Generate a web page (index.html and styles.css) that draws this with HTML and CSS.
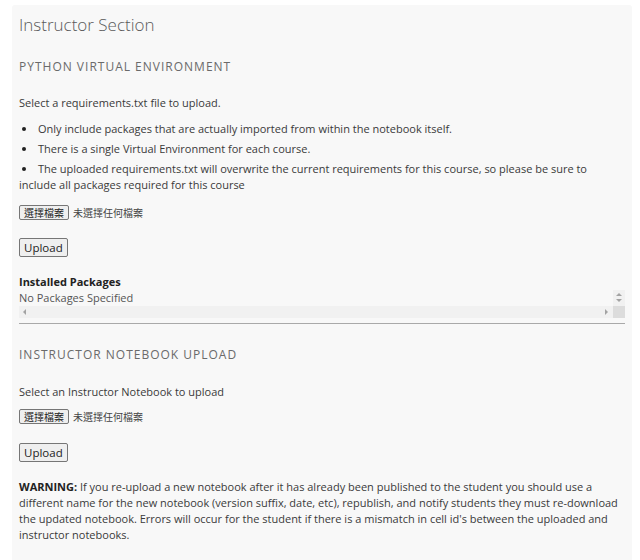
FILE: index.html
```html
<!DOCTYPE html>
<html>
<head>
<meta charset="utf-8">
<link rel="stylesheet" href="styles.css">
</head>
<body>
<div class="panel">
  <h1 class="title">Instructor Section</h1>

  <h2 class="section-head">Python Virtual Environment</h2>
  <p class="intro">Select a requirements.txt file to upload.</p>
  <ul class="bullets">
    <li>Only include packages that are actually imported from within the notebook itself.</li>
    <li>There is a single Virtual Environment for each course.</li>
    <li>The uploaded requirements.txt will overwrite the current requirements for this course, so please be sure to include all packages required for this course</li>
  </ul>
  <div class="file-row file-row-first">
    <button class="file-btn" type="button">選擇檔案</button>
    <span class="file-none">未選擇任何檔案</span>
  </div>
  <button class="upload-btn upload-first" type="button">Upload</button>

  <div class="packages">
    <div class="packages-title">Installed Packages</div>
    <div class="scrollbox">
      <div class="scroll-content">No Packages Specified</div>
      <div class="vbar">
        <span class="arrow-up"></span>
        <span class="arrow-down"></span>
      </div>
      <div class="hbar">
        <span class="arrow-left"></span>
        <span class="arrow-right"></span>
      </div>
      <div class="corner"></div>
    </div>
  </div>

  <hr class="divider">

  <h2 class="section-head section-two">Instructor Notebook Upload</h2>
  <p class="intro intro-two">Select an Instructor Notebook to upload</p>
  <div class="file-row file-row-second">
    <button class="file-btn" type="button">選擇檔案</button>
    <span class="file-none">未選擇任何檔案</span>
  </div>
  <button class="upload-btn upload-second" type="button">Upload</button>

  <p class="warning"><strong>WARNING:</strong> If you re-upload a new notebook after it has already been published to the student you should use a different name for the new notebook (version suffix, date, etc), republish, and notify students they must re-download the updated notebook. Errors will occur for the student if there is a mismatch in cell id's between the uploaded and instructor notebooks.</p>
</div>
</body>
</html>
```

FILE: styles.css
```css
html, body {
  margin: 0;
  padding: 0;
  background: #ffffff;
}

body {
  padding: 5px 8px 0 12px;
  font-family: "Open Sans", "Liberation Sans", sans-serif;
  font-size: 11px;
  line-height: 16px;
  color: #3a3a3a;
}

.panel {
  background: #f8f8f8;
  border-radius: 3px;
  padding: 8px 7px 20px 7px;
  display: flex;
  flex-direction: column;
  align-items: flex-start;
}

.title {
  margin: 0;
  font-size: 17px;
  font-weight: 300;
  line-height: 24px;
  color: #5a5a5a;
}

.section-head {
  margin: 21px 0 0 0;
  font-size: 12px;
  font-weight: 400;
  line-height: 18px;
  letter-spacing: 1px;
  text-transform: uppercase;
  color: #6a6a6a;
}

.section-two {
  margin-top: 22px;
}

.intro {
  margin: 19px 0 0 0;
}

.intro-two {
  margin-top: 20px;
}

.bullets {
  list-style: none;
  margin: 10px 0 0 0;
  padding: 0;
  width: 100%;
}

.bullets li {
  margin-bottom: 4px;
}

.bullets li:last-child {
  margin-bottom: 0;
}

.bullets li::before {
  content: "";
  display: inline-block;
  width: 4px;
  height: 4px;
  border-radius: 50%;
  background: #222222;
  margin: 0 12px 0 3px;
  vertical-align: 2px;
}

.file-row {
  display: flex;
  align-items: center;
  gap: 4px;
  height: 15px;
}

.file-row-first {
  margin-top: 12px;
}

.file-row-second {
  margin-top: 9px;
}

.file-btn {
  font-family: "Noto Sans CJK TC", "Noto Sans CJK SC", sans-serif;
  font-size: 10px;
  line-height: 13px;
  height: 15px;
  padding: 0 4px;
  margin: 0;
  border: 1px solid #767676;
  border-radius: 2px;
  background: #efefef;
  color: #222222;
}

.file-none {
  font-family: "Noto Sans CJK TC", "Noto Sans CJK SC", sans-serif;
  font-size: 10px;
  line-height: 15px;
  color: #444444;
}

.upload-btn {
  font-family: "Open Sans", "Liberation Sans", sans-serif;
  font-size: 11.5px;
  line-height: 15px;
  height: 19px;
  padding: 0 4px;
  margin: 0;
  border: 1px solid #767676;
  border-radius: 2px;
  background: #efefef;
  color: #222222;
}

.upload-first {
  margin-top: 18px;
}

.upload-second {
  margin-top: 19px;
}

.packages {
  margin-top: 17px;
  width: 100%;
}

.packages-title {
  font-weight: 700;
  color: #222222;
}

.scrollbox {
  display: grid;
  grid-template-columns: 1fr 12px;
  grid-template-rows: 16px 12px;
  width: 100%;
}

.scroll-content {
  color: #555555;
  white-space: nowrap;
}

.vbar {
  background: #f1f1f1;
  display: flex;
  flex-direction: column;
  align-items: center;
  justify-content: flex-start;
  padding-top: 3px;
  gap: 3px;
}

.arrow-up {
  width: 0;
  height: 0;
  border-left: 3px solid transparent;
  border-right: 3px solid transparent;
  border-bottom: 3px solid #a3a3a3;
}

.arrow-down {
  width: 0;
  height: 0;
  border-left: 3px solid transparent;
  border-right: 3px solid transparent;
  border-top: 3px solid #a3a3a3;
}

.hbar {
  background: #f1f1f1;
  display: flex;
  align-items: center;
  justify-content: space-between;
  padding: 0 5px 0 4px;
}

.arrow-left {
  width: 0;
  height: 0;
  border-top: 3px solid transparent;
  border-bottom: 3px solid transparent;
  border-right: 3px solid #a3a3a3;
}

.arrow-right {
  width: 0;
  height: 0;
  border-top: 3px solid transparent;
  border-bottom: 3px solid transparent;
  border-left: 3px solid #a3a3a3;
}

.corner {
  background: #dcdcdc;
}

.divider {
  width: 100%;
  margin: 5px 0 0 0;
  border: 0;
  border-top: 1px solid #a9a9a9;
  height: 0;
}

.warning {
  margin: 17px 0 0 0;
}

.warning strong {
  font-weight: 700;
  color: #222222;
}
```
